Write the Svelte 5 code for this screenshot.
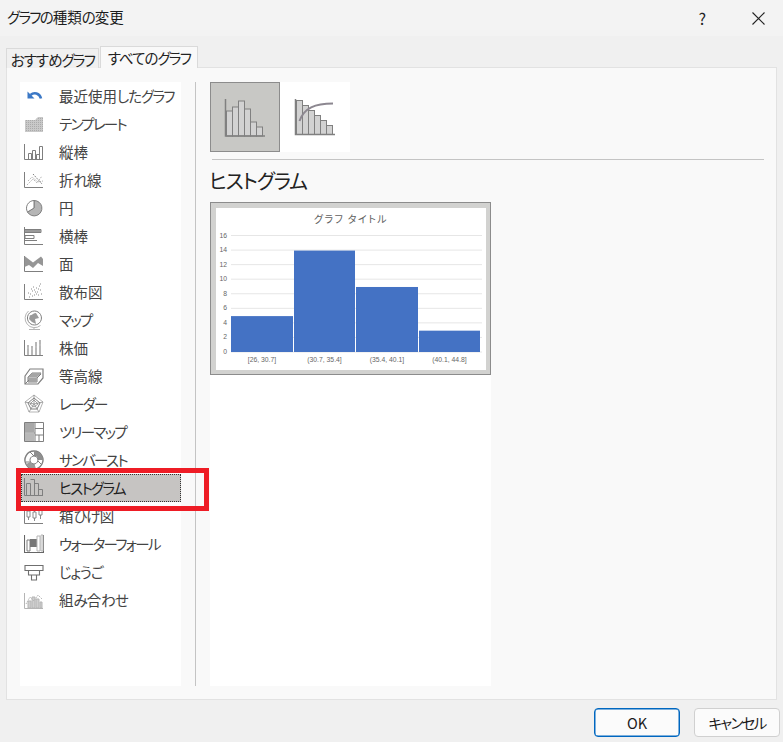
<script>
  const G = '#7f7f7f';
  const L = '#b5b5b5';
  const axis = { d: 'M.5 2V17.5H19', s: G };
  const bar = (x, top, w = 3, bottom = 17) => `M${x + .5} ${bottom}V${top + .5}H${x + w + .5}V${bottom}`;

  // Latin and kanji keep their width; kana runs are set tighter, as in the reference's UI font.
  function runs(text) {
    return text
      .split(/([ァ-ヶー]+|[ぁ-ん]+)/)
      .filter(Boolean)
      .map((t) => ({
        t,
        cls: /^[ァ-ヶー]/.test(t) ? 'kata' : /^[ぁ-ん]/.test(t) ? 'hira' : ''
      }));
  }

  const rows = [
    ['最近使用したグラフ', [
      { d: 'M17 12.5C15.5 7 10 6 6.5 9', s: '#3b78c6', w: 2.6 },
      { d: 'M3.5 5.5L3.5 12.5L10.5 12.5Z', f: '#3b78c6' }
    ]],
    ['テンプレート', [
      { d: 'M1 6H11L14 3H19V18H1Z', f: 'url(#dots)' }
    ]],
    ['縦棒', [axis, { d: bar(4, 11) + bar(8, 8) + bar(12, 12) + bar(15, 4), s: G }]],
    ['折れ線', [axis,
      { d: 'M3 15L9 9L13 13L18 6', s: L, dash: '1.5 1' },
      { d: 'M4 11L8 7L14 12L19 11', s: L, dash: '1.5 1' },
      { d: 'M9 4L18 14', s: G, dash: '1.5 1' }
    ]],
    ['円', [
      { d: 'M10 10V2.5A7.7 7.7 0 1 1 3.5 14Z', f: '#b5b5b5', s: G },
      { d: 'M10 10V2.5A7.7 7.7 0 0 0 3.5 14Z', f: '#fff', s: G }
    ]],
    ['横棒', [
      { d: 'M.5 1V18.5H19', s: G },
      { d: 'M1 3.5H17V6.5H1ZM1 9.5H10V12.5H1ZM1 14.5H13', s: G },
      { d: 'M1 4H17V6H1Z', f: '#9a9a9a' }
    ]],
    ['面', [axis, { d: 'M.5 2L9 8.5L17 2.5L19 5V12L14 9L9 14L5 11L.5 13Z', f: '#969696' }]],
    ['散布図', [axis, { d: 'M6 12h1M8 9h1M10 13h1M12 6h1M13 10h1M15 4h1M16 8h1M17 12h1M5 15h1M9 5h1M11 10h1M14 13h1M7 7h1M16 2h1M4 11h1M8 14h1M12 12h1M10 8h1M14 7h1', s: '#8a8a8a' }]],
    ['マップ', [
      { d: 'M10.5 1A7 7 0 1 1 10.4 1Z', s: G },
      { d: 'M6 5C8 6 9 3 12 3L15 8L11 9L12 14L8 12L5 9Z', f: '#9a9a9a' },
      { d: 'M4.5 1A9 9 0 0 0 16.5 15.5M10 17V19M5 19.5H16', s: L }
    ]],
    ['株価', [axis, { d: 'M4 17V11M8 17V12M12 17V10M16 17V8M4 7V9M8 8V10M12 4V8M16 2V6', s: G, w: 1.1 }, { d: 'M3 10h2M7 11h2M11 9h2M15 7h2', s: G }]],
    ['等高線', [
      { d: 'M1 10L6 3H19V12L14 18H1Z', s: G, w: 1.2 },
      { d: 'M4 11L8 7H17L13 12H4ZM4 12V16H13V12M13 12L17 8', s: G },
      { d: 'M4 12H13V16H4ZM8 7H17L13 11H4Z', f: '#a5a5a5' },
      { d: 'M1 18L5 14', s: G }
    ]],
    ['レーダー', [
      { d: 'M10 1L19 8L15 18H5L1 8Z', s: L },
      { d: 'M10 4L16 9L13 15H7L4 9Z', s: G },
      { d: 'M10 1V10M19 8L10 10M15 18L10 10M5 18L10 10M1 8L10 10M10 6L14 10L10 13L6 10Z', s: '#8a8a8a', w: .8 }
    ]],
    ['ツリーマップ', [
      { d: 'M.5 .5H19.5V19.5H.5ZM11 .5V19.5M11 6.5H19.5M11 13H19.5M15 13V19.5M.5 11H11', s: G },
      { d: 'M1 1H10.5V10.5H1Z', f: '#a8a8a8' },
      { d: 'M1 11.5H10.5V19H1Z', f: '#b8b8b8' }
    ]],
    ['サンバースト', [
      { d: 'M10 1A9 9 0 1 1 9.9 1Z', s: G, w: 1.4 },
      { d: 'M10 1A9 9 0 0 1 19 10L14 10A4 4 0 0 0 10 6Z', f: '#8f8f8f' },
      { d: 'M2 14A9 9 0 0 0 12 19L10.5 14A4 4 0 0 1 6.5 12Z', f: '#9a9a9a' },
      { d: 'M10 6A4 4 0 1 1 9.9 6ZM10 6L6 2M14 11L18 15M6 12L2 12', s: G }
    ]],
    ['ヒストグラム', [
      { d: 'M.5 0V17.5H19', s: G },
      { d: 'M2.5 17V5.5H6.5V17M6.5 1.5H10.5V17M10.5 5.5H14.5V17M14.5 11.5H18.5V17', s: G }
    ]],
    ['箱ひげ図', [
      { d: 'M.5 3V17.5H19', s: G },
      { d: 'M3 5H6V11H3ZM9 6H12V12H9ZM15 4H18V9H15ZM4.5 2V5M4.5 11V14M10.5 3V6M10.5 12V15M16.5 1V4M16.5 9V13', s: G, w: .9 }
    ]],
    ['ウォーターフォール', [
      { d: 'M.5 1V18.5H19.5V1', s: '#666', w: 1.1 },
      { d: 'M3 6H6V17H3Z', s: G },
      { d: 'M6 5H13V13H6Z', f: '#777' },
      { d: 'M13 2H16V17H13ZM17 1H19V17H17Z', s: L }
    ]],
    ['じょうご', [
      { d: 'M1 3.5H19V8.5H1ZM4.5 8.5H15.5V13H4.5ZM7.5 13H12.5V18H7.5Z', s: '#6f6f6f', w: 1.1 }
    ]],
    ['組み合わせ', [
      { d: 'M.5 3V18.5H19', s: L },
      { d: 'M4 18V11H7V18ZM8 18V7H11V18ZM12 18V9H15V18ZM16 18V12H18V18Z', f: '#cfcfcf', s: L },
      { d: 'M2 14L6 7L10 11L14 5L18 9', s: L, dash: '1.5 1' }
    ]]
  ];
  const SELECTED = 14;
  const histBars = [[16.5, 29], [22.5, 25], [28.5, 19], [34.5, 27], [40.5, 40], [46.5, 45]];
  const paretoBars = [[16.5, 18.5], [22.5, 23.5], [28.5, 28.5], [34.5, 33.5], [40.5, 38.5], [46.5, 43.5]];
  const ticks = [16, 14, 12, 10, 8, 6, 4, 2, 0];
  const bars = [
    { x: 15, w: 62, v: 5, label: '[26, 30.7]' },
    { x: 78, w: 61, v: 14, label: '(30.7, 35.4]' },
    { x: 140, w: 62, v: 9, label: '(35.4, 40.1]' },
    { x: 203, w: 61, v: 3, label: '(40.1, 44.8]' }
  ];
  const y0 = 144;
  const unit = 7.28;
</script>

{#snippet jp(text)}
  {#each runs(text) as r}<span class={r.cls}>{r.t}</span>{/each}
{/snippet}

<div class="dialog">
  <svg class="defs" aria-hidden="true">
    <defs>
      <pattern id="dots" width="2" height="2" patternUnits="userSpaceOnUse">
        <rect width="2" height="2" fill="#c9c9c9" />
        <rect width="1" height="1" fill="#ababab" />
      </pattern>
    </defs>
  </svg>

  <header class="titlebar">
    <span class="title">{@render jp('グラフの種類の変更')}</span>
    <span class="help">?</span>
    <svg class="close" viewBox="0 0 13 13" width="13" height="13">
      <path d="M.5 .5L12.5 12.5M12.5 .5L.5 12.5" stroke="#222" fill="none" stroke-width="1.1" />
    </svg>
  </header>

  <nav class="tabs">
    <span class="tab">{@render jp('おすすめグラフ')}</span>
    <span class="tab active">{@render jp('すべてのグラフ')}</span>
  </nav>

  <main class="panel">
    <ul class="list">
      {#each rows as [label, shapes], i}
        <li class="row" class:selected={i === SELECTED}>
          <svg viewBox="0 0 20 20" width="20" height="20">
            {#each shapes as p}
              <path d={p.d} fill={p.f ?? 'none'} stroke={p.s ?? 'none'} stroke-width={p.w ?? 1} stroke-dasharray={p.dash ?? 'none'} />
            {/each}
          </svg>
          <span class="label">{@render jp(label)}</span>
        </li>
      {/each}
    </ul>

    <div class="sep"></div>

    <section class="right">
      <div class="subtypes">
        <div class="subtype current">
          <svg viewBox="0 0 70 70" width="70" height="70">
            {#each histBars as [x, top]}
              <rect x={x} y={top} width="6" height={54 - top} fill="#d2d2d2" stroke="#808080" />
            {/each}
            <path d="M15.5 17V54H55" stroke="#808080" fill="none" stroke-width="1.5" />
          </svg>
        </div>
        <div class="subtype">
          <svg viewBox="0 0 70 70" width="70" height="70">
            {#each paretoBars as [x, top]}
              <rect x={x} y={top} width="6" height={52.5 - top} fill="#d2d2d2" stroke="#808080" />
            {/each}
            <path d="M15.5 17V52.5H55" stroke="#808080" fill="none" stroke-width="1.5" />
            <path d="M19.5 39C24 26 35 21.5 53 21.5" stroke="#8c8790" fill="none" stroke-width="2" />
          </svg>
        </div>
      </div>
      <div class="rule"></div>
      <h2>ヒストグラム</h2>
      <div class="gallery">
        <div class="thumb">
          <svg class="chart" viewBox="0 0 270 162" width="270" height="162">
            <text class="ctitle" x="135" y="14.5" text-anchor="middle">グラフ タイトル</text>
            {#each ticks as t}
              <line x1="15" x2="266" y1={y0 - t * unit} y2={y0 - t * unit} stroke="#e6e6e6" />
              <text class="tick" x="11" y={y0 - t * unit + 2} text-anchor="end">{t}</text>
            {/each}
            {#each bars as b}
              <rect x={b.x} y={y0 - b.v * unit + .5} width={b.w} height={b.v * unit - .5} fill="#4472c4" />
              <text class="tick" x={b.x + b.w / 2} y="154" text-anchor="middle">{b.label}</text>
            {/each}
          </svg>
        </div>
      </div>
    </section>
  </main>

  <footer class="footer">
    <button class="btn primary">OK</button>
    <button class="btn">{@render jp('キャンセル')}</button>
  </footer>

  <div class="highlight"></div>
</div>

<style>
  :global(body) {
    margin: 0;
    background: #f0f0f0;
  }
  .dialog {
    width: 783px;
    height: 742px;
    display: flex;
    flex-direction: column;
    position: relative;
    overflow: hidden;
    font-family: "Noto Sans CJK JP", "Noto Sans", sans-serif;
    font-feature-settings: "palt";
    color: #444;
    background: #f0f0f0;
  }
  .kata {
    letter-spacing: -1.7px;
  }
  .hira {
    letter-spacing: -1px;
  }
  .defs {
    width: 0;
    height: 0;
    flex: none;
  }
  .titlebar {
    height: 36px;
    flex: none;
    display: flex;
    align-items: center;
    padding-left: 7px;
    background: #f3f3f3;
    color: #1c1c1c;
    font-size: 14.5px;
  }
  .title {
    flex: 1;
    margin-bottom: 3px;
  }
  .help {
    font-size: 16px;
    margin-right: 46px;
    color: #222;
  }
  .close {
    margin-right: 18px;
  }
  .tabs {
    flex: none;
    height: 22px;
    margin-top: 10px;
    padding-left: 6px;
    display: flex;
    align-items: flex-end;
    gap: 1px;
    position: relative;
    z-index: 1;
    margin-bottom: -1px;
  }
  .tab {
    height: 20px;
    width: 93px;
    box-sizing: border-box;
    border: 1px solid #dadada;
    border-bottom: none;
    background: #f0f0f0;
    color: #222;
    font-size: 14.5px;
    line-height: 21px;
    text-align: center;
    white-space: nowrap;
  }
  .tab.active {
    height: 22px;
    width: 98px;
    background: #f9f9f9;
    line-height: 22px;
  }
  .panel {
    flex: 1;
    min-height: 0;
    margin: 0 6px;
    padding: 14px 12px 13px 13px;
    display: flex;
    box-sizing: border-box;
    background: #f9f9f9;
    border: 1px solid #e2e2e2;
  }
  .list {
    list-style: none;
    margin: 0;
    padding: 0;
    width: 161px;
    flex: none;
    background: #fff;
  }
  .row {
    height: 28px;
    box-sizing: border-box;
    margin-left: 1px;
    padding-left: 3px;
    display: flex;
    align-items: center;
    gap: 15px;
    font-size: 14.5px;
    white-space: nowrap;
  }
  .row svg {
    flex: none;
  }
  .label {
    margin-bottom: 2px;
  }
  .row.selected {
    background: #c6c4c2;
    outline: 1px dotted #333;
    outline-offset: -1px;
    color: #222;
  }
  .sep {
    width: 1px;
    flex: none;
    margin: 0 14px;
    background: #c4c4c4;
  }
  .right {
    flex: 1;
    min-width: 0;
    display: flex;
    flex-direction: column;
  }
  .subtypes {
    display: flex;
    flex: none;
  }
  .subtype {
    width: 70px;
    height: 70px;
    background: #fff;
  }
  .subtype svg {
    display: block;
  }
  .subtype.current {
    background-color: #c8c8c5;
    background-image: radial-gradient(#bdbdba 0.6px, transparent 0.7px);
    background-size: 4px 4px;
    box-shadow: inset 0 0 0 1px #8c8c8c;
  }
  .rule {
    height: 1px;
    flex: none;
    margin: 7px 0 0 2px;
    background: #c4c4c4;
  }
  h2 {
    margin: 0 0 0 -1px;
    height: 42px;
    flex: none;
    font-size: 20px;
    font-weight: 400;
    line-height: 42px;
    letter-spacing: -1.2px;
    color: #222;
  }
  .gallery {
    flex: 1;
    width: 281px;
    background: #fff;
  }
  .thumb {
    box-sizing: border-box;
    width: 281px;
    height: 173px;
    border: 1px solid #8c8c8c;
    padding: 5px;
    background: #d2d2d0;
  }
  .chart {
    display: block;
    background: #fff;
  }
  .ctitle {
    font-size: 10px;
    letter-spacing: 1.4px;
    fill: #606060;
  }
  .tick {
    font-family: "Liberation Sans", sans-serif;
    font-size: 6.8px;
    fill: #666;
  }
  .footer {
    height: 42px;
    flex: none;
    display: flex;
    justify-content: flex-end;
    align-items: flex-start;
    gap: 14px;
    padding: 8px 3px 0 0;
    box-sizing: border-box;
  }
  .btn {
    width: 86px;
    height: 29px;
    padding: 0;
    box-sizing: border-box;
    border: 1px solid #d0d0d0;
    border-radius: 4px;
    background: #fbfbfb;
    color: #1a1a1a;
    font: inherit;
    font-size: 14.5px;
    font-feature-settings: "palt";
  }
  .btn.primary {
    border-color: #0067c0;
    box-shadow: inset 0 0 0 0.5px #0067c0;
  }
  .highlight {
    position: absolute;
    left: 16px;
    top: 468px;
    width: 193px;
    height: 43px;
    box-sizing: border-box;
    border: 5px solid #ee1c25;
    pointer-events: none;
  }
</style>
